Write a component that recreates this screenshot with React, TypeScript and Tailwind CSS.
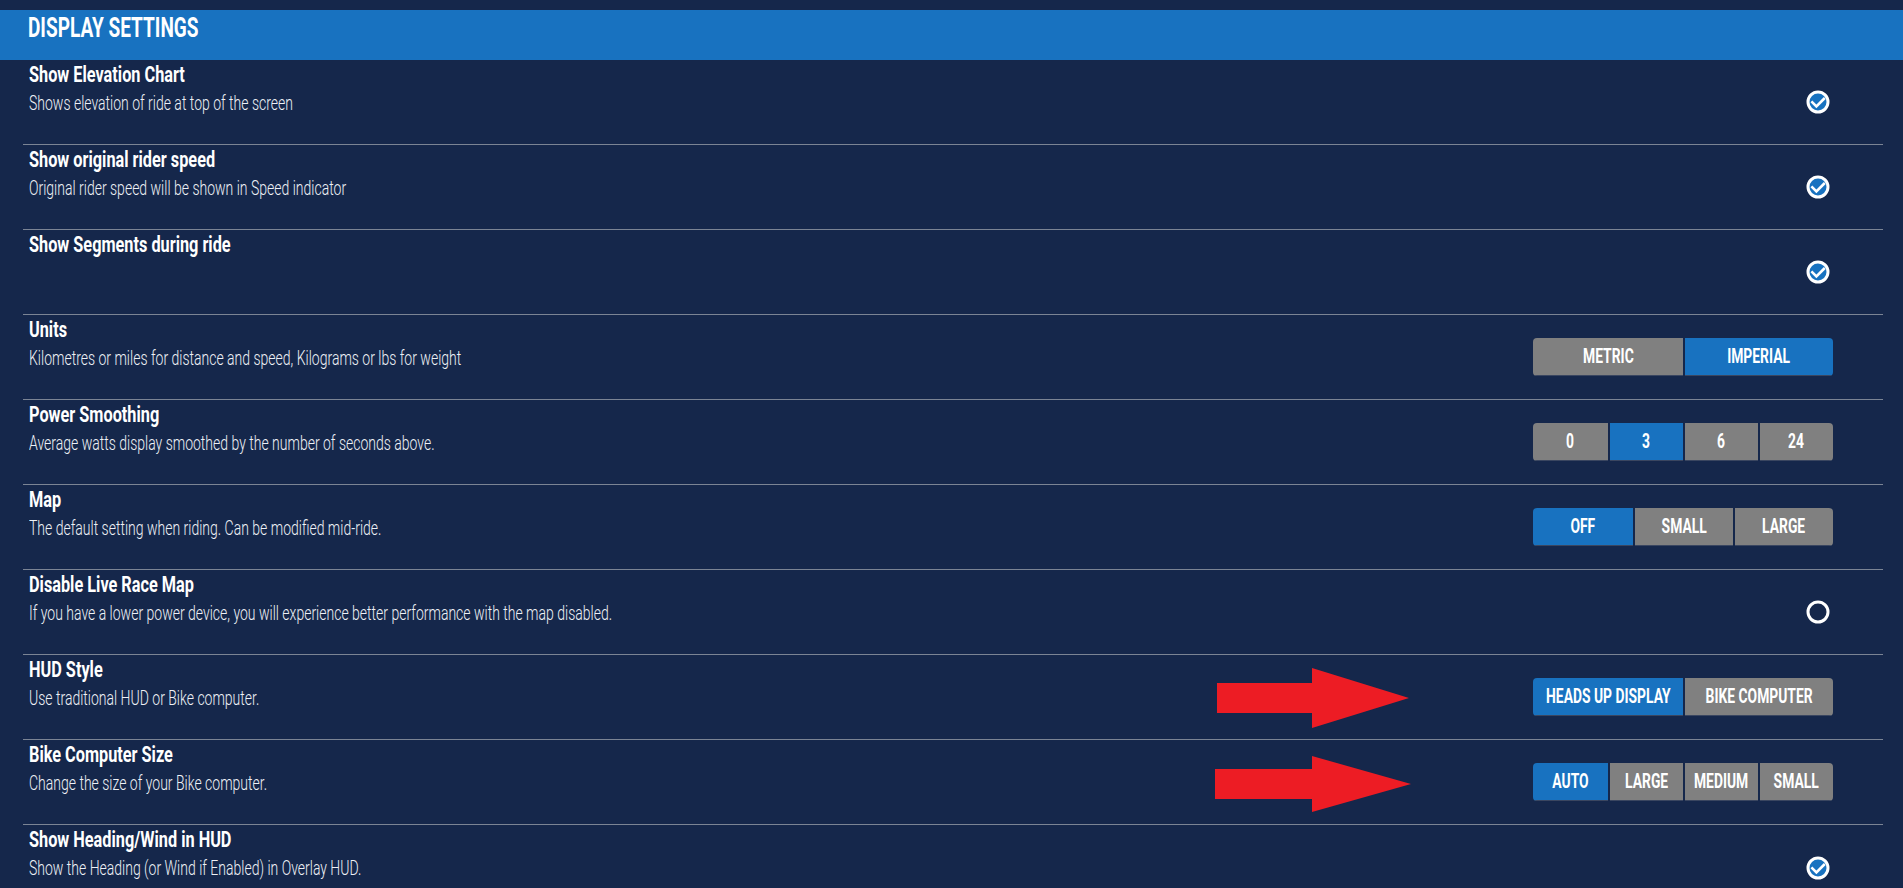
const titleFont = "font-['Roboto',sans-serif]";

type Setting = {
  title: string;
  desc?: string;
  checked?: boolean;
  options?: { label: string; active?: boolean; width: string }[];
};

const settings: Setting[] = [
  { title: "Show Elevation Chart", desc: "Shows elevation of ride at top of the screen", checked: true },
  { title: "Show original rider speed", desc: "Original rider speed will be shown in Speed indicator", checked: true },
  { title: "Show Segments during ride", checked: true },
  {
    title: "Units",
    desc: "Kilometres or miles for distance and speed, Kilograms or lbs for weight",
    options: [
      { label: "METRIC", width: "w-[150px]" },
      { label: "IMPERIAL", active: true, width: "w-[148px]" },
    ],
  },
  {
    title: "Power Smoothing",
    desc: "Average watts display smoothed by the number of seconds above.",
    options: [
      { label: "0", width: "w-[75px]" },
      { label: "3", active: true, width: "w-[73px]" },
      { label: "6", width: "w-[73px]" },
      { label: "24", width: "w-[73px]" },
    ],
  },
  {
    title: "Map",
    desc: "The default setting when riding. Can be modified mid-ride.",
    options: [
      { label: "OFF", active: true, width: "w-[100px]" },
      { label: "SMALL", width: "w-[98px]" },
      { label: "LARGE", width: "w-[98px]" },
    ],
  },
  {
    title: "Disable Live Race Map",
    desc: "If you have a lower power device, you will experience better performance with the map disabled.",
    checked: false,
  },
  {
    title: "HUD Style",
    desc: "Use traditional HUD or Bike computer.",
    options: [
      { label: "HEADS UP DISPLAY", active: true, width: "w-[150px]" },
      { label: "BIKE COMPUTER", width: "w-[148px]" },
    ],
  },
  {
    title: "Bike Computer Size",
    desc: "Change the size of your Bike computer.",
    options: [
      { label: "AUTO", active: true, width: "w-[75px]" },
      { label: "LARGE", width: "w-[73px]" },
      { label: "MEDIUM", width: "w-[73px]" },
      { label: "SMALL", width: "w-[73px]" },
    ],
  },
  { title: "Show Heading/Wind in HUD", desc: "Show the Heading (or Wind if Enabled) in Overlay HUD.", checked: true },
];

function CheckCircle({ checked }: { checked: boolean }) {
  return (
    <svg width="24" height="24" viewBox="0 0 24 24" aria-hidden="true">
      <circle cx="12" cy="12" r="10" fill={checked ? "#1872c0" : "none"} stroke="#fff" strokeWidth="3" />
      {checked && <path d="M5.4 11.4 10.4 16.4 18.8 8" fill="none" stroke="#fff" strokeWidth="2.6" />}
    </svg>
  );
}

function ButtonGroup({ options }: { options: NonNullable<Setting["options"]> }) {
  return (
    <div className="flex gap-[2px] overflow-hidden rounded-[4px]">
      {options.map((o) => (
        <div
          key={o.label}
          className={`flex h-[38px] items-center justify-center border-b border-[#3a4660] ${o.width} ${
            o.active ? "bg-[#1872c0]" : "bg-[#808080]"
          }`}
        >
          <span className={`${titleFont} scale-x-[0.66] whitespace-nowrap text-[21px] font-bold text-white`}>{o.label}</span>
        </div>
      ))}
    </div>
  );
}

function Arrow({ className, width, height, headX, shaftTop, shaftBottom }: {
  className: string;
  width: number;
  height: number;
  headX: number;
  shaftTop: number;
  shaftBottom: number;
}) {
  return (
    <svg className={`absolute ${className}`} width={width} height={height} viewBox={`0 0 ${width} ${height}`} aria-hidden="true">
      <path
        d={`M0 ${shaftTop}H${headX}V0L${width} ${height / 2} ${headX} ${height}V${shaftBottom}H0Z`}
        fill="#ed1c24"
      />
    </svg>
  );
}

export default function App() {
  return (
    <div className="relative h-[888px] overflow-hidden bg-[#15274b] pt-[10px] text-white">
      <div className={`${titleFont} h-[50px] bg-[#1872c0] pl-[28px] pt-[3px]`}>
        <span className="inline-block origin-left scale-x-[0.68] whitespace-nowrap text-[28px] font-bold leading-[30px]">
          DISPLAY SETTINGS
        </span>
      </div>
      <div className="mx-[23px] w-[1860px]">
        {settings.map((s) => (
          <div key={s.title} className="flex h-[85px] items-center justify-between border-b border-[#7b8494] pl-[6px] pr-[50px] last:border-b-0">
            <div className="h-full min-w-0 pt-[2px]">
              <div className={`${titleFont} origin-left scale-x-[0.74] whitespace-nowrap text-[22px] font-bold leading-[26px]`}>
                {s.title}
              </div>
              {s.desc && (
                <div className={`${titleFont} mt-[2px] origin-left scale-x-[0.7] whitespace-nowrap text-[20px] font-light leading-[26px] text-[#eef1f6]`}>
                  {s.desc}
                </div>
              )}
            </div>
            {s.options ? (
              <ButtonGroup options={s.options} />
            ) : (
              <div className="mr-[3px]">
                <CheckCircle checked={!!s.checked} />
              </div>
            )}
          </div>
        ))}
      </div>
      <Arrow className="left-[1217px] top-[668px]" width={192} height={60} headX={95} shaftTop={15} shaftBottom={45} />
      <Arrow className="left-[1215px] top-[756px]" width={196} height={56} headX={97} shaftTop={13} shaftBottom={43} />
    </div>
  );
}
